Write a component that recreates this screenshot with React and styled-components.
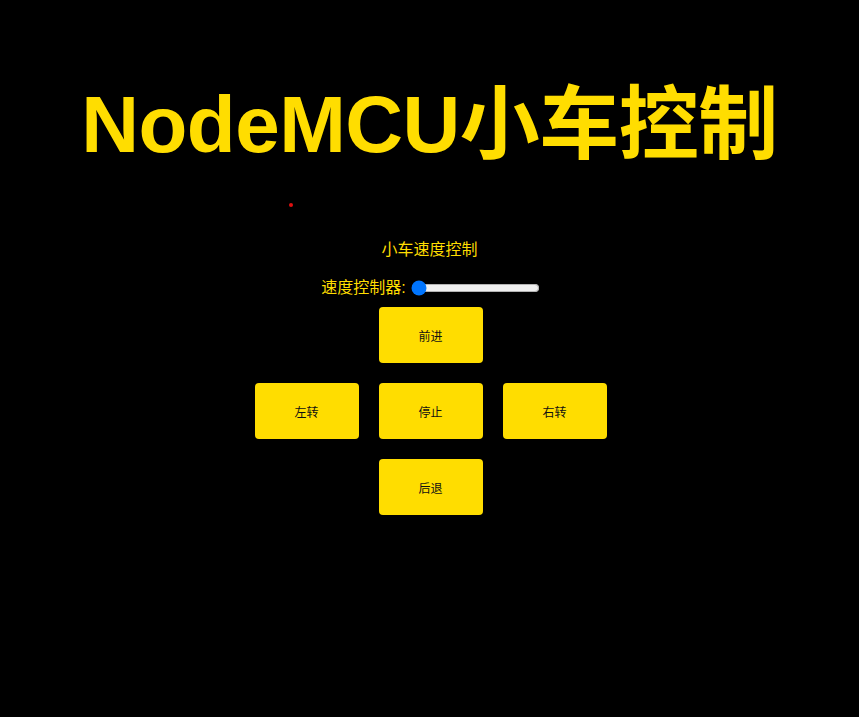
import React from "react";
import styled, { createGlobalStyle } from "styled-components";

const Global = createGlobalStyle`
  html, body {
    margin: 0;
    padding: 0;
    background: #000;
  }
  body {
    font-family: "Liberation Sans", "Noto Sans CJK SC", sans-serif;
    color: #ffdd00;
  }
`;

const Page = styled.div`
  width: 100%;
  min-height: 717px;
  background: #000;
  display: flex;
  flex-direction: column;
  align-items: center;
`;

const Title = styled.h1`
  margin: 79px 0 0;
  font-size: 80px;
  line-height: 92px;
  font-weight: bold;
  letter-spacing: -0.5px;
  color: #ffdd00;
  text-align: center;
`;

const DotRow = styled.div`
  width: 100%;
  height: 35px;
  position: relative;
`;

const Dot = styled.span`
  position: absolute;
  left: 289px;
  top: 32px;
  width: 4px;
  height: 4px;
  border-radius: 50%;
  background: #e01010;
`;

const Subtitle = styled.p`
  margin: 34px 0 0;
  font-size: 16px;
  line-height: 20px;
  color: #ffdd00;
`;

const SpeedRow = styled.label`
  margin-top: 18px;
  display: flex;
  align-items: center;
  gap: 3px;
  font-size: 16px;
  line-height: 20px;
  color: #ffdd00;
  margin-left: 4px;
`;

const Range = styled.input`
  margin: 2px;
  width: 129px;
`;

const Pad = styled.div`
  margin-top: 9px;
  margin-left: 2px;
  display: grid;
  grid-template-columns: repeat(3, 104px);
  grid-auto-rows: 56px;
  gap: 20px;
`;

const Btn = styled.button`
  grid-column: ${p => p.col};
  grid-row: ${p => p.row};
  border: none;
  border-radius: 4px;
  background: #ffdd00;
  color: #111;
  font-family: "Liberation Sans", "Noto Sans CJK SC", sans-serif;
  font-size: 12px;
  cursor: pointer;
`;

export default function App() {
  return (
    <>
      <Global />
      <Page>
        <Title>NodeMCU小车控制</Title>
        <DotRow>
          <Dot />
        </DotRow>
        <Subtitle>小车速度控制</Subtitle>
        <SpeedRow>
          速度控制器:
          <Range type="range" min="0" max="100" defaultValue="0" />
        </SpeedRow>
        <Pad>
          <Btn col={2} row={1}>前进</Btn>
          <Btn col={1} row={2}>左转</Btn>
          <Btn col={2} row={2}>停止</Btn>
          <Btn col={3} row={2}>右转</Btn>
          <Btn col={2} row={3}>后退</Btn>
        </Pad>
      </Page>
    </>
  );
}
